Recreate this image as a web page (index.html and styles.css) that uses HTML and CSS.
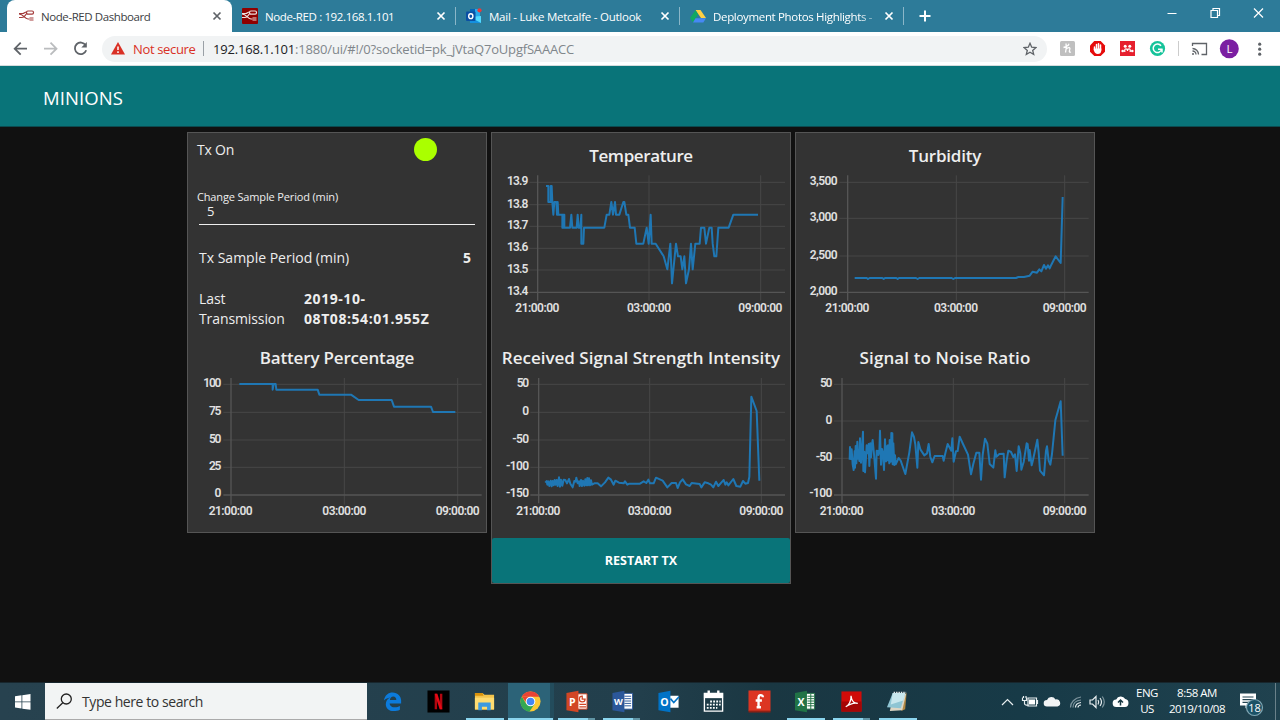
FILE: index.html
```html
<!DOCTYPE html>
<html lang="en">
<head>
<meta charset="utf-8">
<title>Node-RED Dashboard</title>
<link rel="stylesheet" href="styles.css">
</head>
<body>
<svg class="defs" width="0" height="0">
  <symbol id="nodes" viewBox="0 0 16 16"><path d="M0 5.500h3.500c2 0 2-1.500 4-1.500M0 6c5 0 5 5 9 5h1.500" fill="none" stroke="currentColor" stroke-width="1.200"/><rect x="7.500" y="3" width="7" height="3.200" rx="1.400" fill="none" stroke="currentColor" stroke-width="1.200"/><path d="M0 9.500h3c3 0 3-3 5-4M10.500 10h4M10.500 12h4" fill="none" stroke="currentColor" stroke-width="1.100"/></symbol>
  <symbol id="close" viewBox="0 0 10 10"><path d="M1.500 1.500l7 7M8.500 1.500l-7 7" stroke="currentColor" stroke-width="1.700" fill="none"/></symbol>
</svg>
<header class="tabs">
  <div class="tab active"><svg class="fav red" width="16" height="16"><use href="#nodes"/></svg><span class="t1">Node-RED Dashboard</span><svg class="x" width="10" height="10"><use href="#close"/></svg></div>
  <div class="tab"><svg class="fav boxed" width="16" height="16"><use href="#nodes"/></svg><span class="t2">Node-RED : 192.168.1.101</span><svg class="x" width="10" height="10"><use href="#close"/></svg></div>
  <div class="tab"><svg class="fav" width="16" height="16" viewBox="0 0 16 16"><path d="M4 1h10v14H4z" fill="#28a8ea"/><path d="M4 1h5v5H4z" fill="#0364b8"/><path d="M4 9l11-1v7H4z" fill="#50d9ff"/><path d="M4 9l11 6H4z" fill="#1490df"/><rect y="3.500" width="9.500" height="9.500" rx="1" fill="#0a50a4"/><ellipse cx="4.800" cy="8.200" rx="2.100" ry="2.400" fill="none" stroke="#fff" stroke-width="1.400"/><circle cx="13.500" cy="2.300" r="2.100" fill="#e83b3b"/></svg><span class="t3">Mail - Luke Metcalfe - Outlook</span><svg class="x" width="10" height="10"><use href="#close"/></svg></div>
  <div class="tab"><svg class="fav" width="16" height="16" viewBox="0 0 16 16"><path d="M5.500 2h5L16 10h-5z" fill="#ffcf43"/><path d="M5.500 2L8 6.500 3 14.500 0 10z" fill="#11a861"/><path d="M5.500 10.200H16L13.300 14.500H3z" fill="#4688f4"/></svg><span class="t4">Deployment Photos Highlights -</span><svg class="x" width="10" height="10"><use href="#close"/></svg></div>
  <svg class="plus" width="12" height="12" viewBox="0 0 12 12"><path d="M6 .5v11M.5 6h11" stroke="#fff" stroke-width="2"/></svg>
  <svg class="wincontrols" width="110" height="28" viewBox="1166 0 110 28" fill="none" stroke="#fff" stroke-width="1.200"><path d="M1167.500 13.500h9M1254 8.500l9 9M1263 8.500l-9 9"/><path d="M1211 10.500h6.500v7h-6.500zM1213 10V8.500h6.500v7h-2"/></svg>
</header>
<nav class="toolbar">
  <svg class="navicons" width="102" height="34" viewBox="0 32 102 34" fill="none" stroke="#5f6368" stroke-width="1.800"><path d="M27 48.700H15M20.700 42.700l-6 6 6 6"/><path stroke="#babcbe" d="M44 48.700h12M50.500 42.700l6 6-6 6"/><path d="M85.600 45.200a5.800 5.800 0 1 0 .6 5"/><path d="M86.800 42v5.500h-5.500z" fill="#5f6368" stroke="none"/></svg>
  <div class="omnibox">
    <svg width="14" height="13" viewBox="0 0 14 13"><path d="M7 0l7 12.500H0z" fill="#d93025"/><path d="M7 4.500V8M7 9.300v1.600" stroke="#fff" stroke-width="1.500"/></svg>
    <span class="warn">Not secure</span><i class="vr"></i>
    <span class="url"><b>192.168.1.101</b>:1880/ui/#!/0?socketid=pk_jVtaQ7oUpgfSAAACC</span>
    <svg class="star" width="14" height="14" viewBox="0 0 14 14"><path d="M7 1.300l1.700 3.900 4.200.4-3.200 2.800 1 4.100L7 10.300l-3.700 2.200 1-4.100-3.200-2.800 4.200-.4z" fill="none" stroke="#5f6368" stroke-width="1.300"/></svg>
  </div>
  <svg class="ext" width="233" height="34" viewBox="1047 32 233 34">
    <rect x="1060" y="41" width="15" height="15" rx="1.500" fill="#bfbfbf"/><path d="M1065.500 52.500c1-3 1-6 .5-9M1063.500 47.500c4-1 6-3 5-3.700M1066 49c4-2.500 4.500-1 3.500 1.500-.5 1.500 0 2 1.500 1.500" fill="none" stroke="#fff" stroke-width="1.300"/>
    <path d="M1094.300 41h6.400l4.300 4.500v6.200l-4.300 4.300h-6.400l-4.300-4.300v-6.200z" fill="#e60b0b"/><path d="M1094.500 47v3M1096.500 44.500v5M1098.500 43.800v5.500M1100.500 45v5" stroke="#fff" stroke-width="1.500" stroke-linecap="round"/><path d="M1093.800 48.500h7.500v2c0 2.500-1.500 3.500-3.500 3.500s-3.500-1.500-4-4z" fill="#fff"/>
    <rect x="1120" y="41" width="15" height="15" fill="#e6202e"/><circle cx="1125.200" cy="46.200" r="1.500" fill="#fff"/><circle cx="1129.800" cy="46.200" r="1.500" fill="#fff"/><circle cx="1122.700" cy="51" r="1.300" fill="#fff"/><circle cx="1132.300" cy="51" r="1.300" fill="#fff"/><path d="M1124.800 52c-.5-2.800.5-4 2.700-2.500 2.200-1.500 3.200-.3 2.700 2.500M1127.500 49.500v1.500" fill="none" stroke="#fff" stroke-width="1.300"/>
    <circle cx="1157.500" cy="48.500" r="7.600" fill="#15c39a"/><path d="M1161 45.700a4.300 4.300 0 1 0 .7 3.500h-3.700M1162 49v3.500" fill="none" stroke="#fff" stroke-width="1.500"/>
    <path d="M1178.500 41v15" stroke="#ccc"/>
    <g fill="none" stroke="#5f6368" stroke-width="1.300"><path d="M1192.500 46v-2.500h14v11h-5M1192.500 48.500a6 6 0 0 1 6 6M1192.500 51a3.500 3.500 0 0 1 3.500 3.500"/></g><circle cx="1193" cy="54" r="1" fill="#5f6368"/>
    <circle cx="1229.300" cy="48.700" r="9.500" fill="#7b1fa2"/><text x="1229.500" y="53" text-anchor="middle" font-size="11.500" fill="#fff">L</text>
    <g fill="#5f6368"><circle cx="1259.700" cy="44.200" r="1.600"/><circle cx="1259.700" cy="49.200" r="1.600"/><circle cx="1259.700" cy="54.200" r="1.600"/></g>
  </svg>
</nav>
<div class="appbar"><h1>MINIONS</h1></div>
<main class="board">
  <section class="card">
    <div class="status"><span>Tx On</span><i class="led"></i></div>
    <div class="field"><label>Change Sample Period (min)</label><div class="value">5</div></div>
    <div class="row"><span class="period">Tx Sample Period (min)</span><b>5</b></div>
    <div class="last"><span>Last Transmission</span><b>2019-10-08T08:54:01.955Z</b></div>
    <h2 class="h-bat">Battery Percentage</h2>
    <svg class="chart" viewBox="24 96 894 456">
      <path class="grid" d="M130 133H905M130 217H905M130 300H905M130 382H905M493 114V494M833 114V494"/><path class="axis" d="M130 465H905M153 114V494"/>
      <g class="y"><text x="124" y="142" textLength="54">100</text><text x="124" y="225" textLength="37">75</text><text x="124" y="309" textLength="37">50</text><text x="124" y="389" textLength="37">25</text><text x="124" y="472">0</text></g>
      <g class="xl"><text x="152" y="524" textLength="132">21:00:00</text><text x="493" y="524" textLength="132">03:00:00</text><text x="833" y="524" textLength="132">09:00:00</text></g>
      <polyline points="178,132 278,132 278,149 281,132 287,132 289,149 413,149 418,164 513,164 536,180 635,180 642,200 753,200 759,216 826,216"/>
    </svg>
  </section>
  <section class="card">
    <h2 class="h-temp">Temperature</h2>
    <svg class="chart" viewBox="18 132 894 456">
      <path class="grid" d="M130 169H897M130 236H897M130 301H897M130 367H897M130 432H897M489 148V524M824 148V524"/><path class="axis" d="M130 499H897M155 148V524"/>
      <g class="y"><text x="127" y="177" textLength="64">13.9</text><text x="127" y="245" textLength="64">13.8</text><text x="127" y="310" textLength="64">13.7</text><text x="127" y="376" textLength="64">13.6</text><text x="127" y="441" textLength="64">13.5</text><text x="127" y="508" textLength="64">13.4</text></g>
      <g class="xl"><text x="154" y="558" textLength="132">21:00:00</text><text x="489" y="558" textLength="132">03:00:00</text><text x="823" y="558" textLength="132">09:00:00</text></g>
      <polyline points="180,180 187,180 187,228 194,228 194,180 197,180 199,228 202,266 205,228 211,228 213,266 215,228 217,266 229,266 229,305 231,305 231,266 235,266 235,305 252,305 256,266 259,305 272,305 275,266 278,305 283,305 286,266 286,353 292,353 294,305 355,305 362,266 370,266 376,228 381,266 387,228 390,266 400,266 412,228 415,228 421,266 427,266 432,305 446,305 451,353 472,353 482,305 488,353 494,266 497,353 509,353 533,391 544,430 553,353 558,472 570,353 576,391 584,391 589,430 595,391 600,472 609,430 615,353 620,430 628,353 641,353 645,305 655,305 660,353 670,305 677,305 680,353 685,391 691,391 697,305 728,305 742,266 816,266"/>
    </svg>
    <h2 class="h-rssi">Received Signal Strength Intensity</h2>
    <svg class="chart" viewBox="18 96 894 456">
      <path class="grid" d="M133 133H897M133 217H897M133 300H897M133 382H897M491 114V490M826 114V490"/><path class="axis" d="M133 465H897M158 114V490"/>
      <g class="y"><text x="129" y="142" textLength="37">50</text><text x="129" y="225">0</text><text x="129" y="309" textLength="50">-50</text><text x="129" y="389" textLength="69">-100</text><text x="129" y="472" textLength="69">-150</text></g>
      <g class="xl"><text x="157" y="524" textLength="132">21:00:00</text><text x="491" y="524" textLength="132">03:00:00</text><text x="826" y="524" textLength="132">09:00:00</text></g>
      <polyline points="178,428 182,423 184,434 187,424 190,438 194,422 197,439 200,423 203,436 206,420 209,434 212,420 215,438 219,412 222,440 225,419 229,437 233,419 238,420 243,430 249,417 253,431 260,442 265,423 269,425 271,413 275,430 279,424 281,438 285,420 288,438 291,422 295,437 298,418 301,436 304,414 306,436 309,415 312,436 315,421 318,434 325,430 335,430 345,439 357,427 367,413 375,419 383,434 388,422 399,428 413,430 417,424 424,434 430,431 462,431 473,424 481,429 487,419 492,430 503,430 510,413 530,422 544,442 557,429 570,429 575,444 582,427 590,418 600,433 611,438 617,429 641,432 646,442 656,427 667,430 675,434 682,442 690,425 697,438 709,424 713,420 718,434 722,427 727,436 742,417 751,438 763,440 771,423 778,431 786,429 790,411 796,170 812,213 820,422"/>
    </svg>
    <button class="restart">RESTART TX</button>
  </section>
  <section class="card">
    <h2 class="h-turb">Turbidity</h2>
    <svg class="chart" viewBox="18 132 894 456">
      <path class="grid" d="M148 169H896M148 277H896M148 390H896M499 148V524M824 148V524"/><path class="axis" d="M148 499H896M173 148V524"/>
      <g class="y"><text x="143" y="177" textLength="84">3,500</text><text x="143" y="286" textLength="84">3,000</text><text x="143" y="399" textLength="84">2,500</text><text x="143" y="508" textLength="84">2,000</text></g>
      <g class="xl"><text x="172" y="558" textLength="132">21:00:00</text><text x="498" y="558" textLength="132">03:00:00</text><text x="824" y="558" textLength="132">09:00:00</text></g>
      <polyline points="194,456 230,456 234,459 239,456 277,456 281,459 285,456 319,456 323,459 327,456 378,456 383,459 388,456 485,456 490,459 495,456 678,456 685,453 702,453 719,449 728,437 741,440 748,430 754,436 762,417 768,428 774,418 779,427 784,416 797,391 812,411 818,213"/>
    </svg>
    <h2 class="h-snr">Signal to Noise Ratio</h2>
    <svg class="chart" viewBox="18 96 894 456">
      <path class="grid" d="M132 133H896M132 243H896M132 355H896M490 114V490M824 114V490"/><path class="axis" d="M132 465H896M156 114V490"/>
      <g class="y"><text x="127" y="142" textLength="37">50</text><text x="127" y="251">0</text><text x="127" y="363" textLength="50">-50</text><text x="127" y="472" textLength="69">-100</text></g>
      <g class="xl"><text x="155" y="524" textLength="132">21:00:00</text><text x="490" y="524" textLength="132">03:00:00</text><text x="824" y="524" textLength="132">09:00:00</text></g>
      <polyline points="179,359 180,321 182,357 185,328 188,373 191,390 194,333 195,383 197,318 199,370 202,305 204,356 207,330 208,363 210,295 213,368 216,324 219,275 220,393 223,335 225,397 228,354 230,316 234,340 236,312 238,378 241,310 243,352 246,312 248,300 252,342 258,416 260,332 264,333 265,345 268,335 270,272 273,374 276,327 279,340 282,390 285,298 288,364 290,319 293,361 294,316 298,370 299,300 302,365 304,279 306,350 307,280 308,373 310,310 313,375 315,346 317,373 326,354 332,362 346,402 358,337 366,277 372,291 376,314 382,383 385,306 391,328 403,346 411,340 416,312 421,351 427,367 434,348 458,348 461,362 466,340 473,312 484,332 487,295 491,365 498,334 503,333 509,290 519,312 534,344 543,403 550,371 559,338 568,338 573,419 578,345 585,296 592,311 599,372 610,383 616,331 619,350 628,342 641,341 644,412 650,361 655,332 663,336 670,351 675,343 680,393 686,319 691,340 694,389 701,366 710,310 713,312 717,362 719,330 725,376 729,360 742,299 746,337 750,392 762,406 768,332 771,319 776,362 781,374 786,342 796,241 812,184 818,347"/>
    </svg>
  </section>
</main>
<footer class="taskbar">
  <div class="start"><svg width="16" height="16" viewBox="0 0 16 16"><path d="M0 2.200l6.500-.9v6.200H0zM7.300 1.200L15.500 0v7.500H7.300zM0 8.300h6.500v6.200L0 13.600zM7.300 8.300h8.200v7.500l-8.200-1.100z" fill="#fff"/></svg></div>
  <div class="search"><svg width="17" height="17" viewBox="0 0 17 17" fill="none" stroke="#222" stroke-width="1.300"><circle cx="10.300" cy="6" r="5"/><path d="M6.800 9.700L.8 15.500"/></svg><span>Type here to search</span></div>
  <div class="apps">
    <div class="app"><svg viewBox="0 0 24 24"><path d="M3 11C4 5 8 2.500 12 2.500c5.500 0 9 4 9 8.500v3H9c.3 3 3 4 5.500 4 2 0 3.800-.5 5.200-1.300v3.800c-2 1-4 1.500-6.400 1.500-5 0-8.300-2.800-8.300-7.200 0-3 1.500-5.500 4.500-7C7 8.500 5 9 3 11zM9.300 10.500h6.700c0-2.500-1.300-3.800-3.200-3.800-2 0-3.200 1.400-3.500 3.800z" fill="#0c7bdc"/></svg></div>
    <div class="app"><svg viewBox="0 0 24 24"><path d="M.5.500h23v23H.5z" fill="#000"/><path d="M8 4h2.500v16H8zM13.500 4H16v16h-2.500z" fill="#b20710"/><path d="M8 4h2.800l5.200 16h-2.800z" fill="#e50914"/></svg></div>
    <div class="app run"><svg viewBox="0 0 24 24"><path d="M2 3h8l2 2h10v15.500H2z" fill="#f4c44c"/><path d="M2 3h8l1 3H2z" fill="#d9920b"/><path d="M2 8h20v12H2z" fill="#ffdc70"/><path d="M5.500 21v-8h13v8h-3.800v-3.500H9.300V21z" fill="#3d9ae0"/></svg></div>
    <div class="app run on"><svg viewBox="0 0 24 24"><circle cx="12" cy="12" r="10.500" fill="#fcc934"/><path d="M2.900 6.700A10.500 10.500 0 0 1 21.200 7H12z" fill="#e94335"/><path d="M2.900 6.700A10.500 10.500 0 0 0 11 22.500L16.300 14.500 7.600 14.500z" fill="#34a853"/><path d="M2.900 6.700L12 7l-4.500 6z" fill="#e94335"/><circle cx="12" cy="12" r="5" fill="#fff"/><circle cx="12" cy="12" r="4" fill="#4286f5"/></svg></div>
    <div class="app run multi"><svg viewBox="0 0 24 24"><path d="M13 4h10v16H13z" fill="#fff" stroke="#d24625"/><path d="M18 6.500a3 3 0 1 0 3 3h-3zM15 15h7M15 17.500h7" stroke="#d24625" fill="none" stroke-width="1.300"/><path d="M1.500 3L14 .8v22.400L1.500 21z" fill="#d24625"/><text x="7.700" y="16.300">P</text></svg></div>
    <div class="app run multi"><svg viewBox="0 0 24 24"><path d="M12 3.500h10.500v16.500H12z" fill="#fff" stroke="#2b579a"/><path d="M14 6.500h7M14 9h7M14 11.500h7M14 14h7M14 16.500h7" stroke="#2b579a"/><path d="M1.500 3L14 .8v22.400L1.500 21z" fill="#2b579a"/><text class="w" x="7.700" y="15.500">W</text></svg></div>
    <div class="app"><svg viewBox="0 0 24 24"><path d="M12 6h10.500v12.500H12z" fill="#fff"/><path d="M14 9l3.500 4 5.500-6" fill="none" stroke="#0072c6" stroke-width="1.700"/><path d="M1.500 3L14 .8v22.400L1.500 21z" fill="#0072c6"/><text x="7.700" y="16.300">O</text></svg></div>
    <div class="app"><svg viewBox="0 0 24 24"><path d="M2.500 3.500h19v18.500h-19z" fill="none" stroke="#fff" stroke-width="1.400"/><path d="M2 3.500h20V8.500H2z" fill="#fff"/><path d="M7 .5v6M17 .5v6" stroke="#fff" stroke-width="2.500"/><path d="M8.500 12h11M5 15.300h14.500M5 18.600h11" stroke="#fff" stroke-width="1.900" stroke-dasharray="1.900 1.300"/></svg></div>
    <div class="app"><svg viewBox="0 0 24 24"><path d="M.5.500h23v21.500H.5z" fill="#dc3522"/><path d="M.5 21.500h23v2H.5z" fill="#8e2014"/><path d="M15.500 7.500c0-3-4.500-3-4.500.5V18M8 11h6.500M9 18h4.500" fill="none" stroke="#fff" stroke-width="2.500"/></svg></div>
    <div class="app run"><svg viewBox="0 0 24 24"><path d="M12 3.500h9.500v16.500H12z" fill="#fff" stroke="#217346"/><path d="M14 6.500h7M14 9h7M14 11.500h7M14 14h7M14 16.500h7M17.500 4v16" stroke="#217346"/><path d="M1 3L13.500.8v22.400L1 21z" fill="#217346"/><text x="7.200" y="16.300">X</text></svg></div>
    <div class="app run multi"><svg viewBox="0 0 24 24"><path d="M1.500 1.500h21v21h-21z" fill="#d10b08"/><path d="M1.500 12h21v10.500h-21z" fill="#a50505"/><path d="M6 17.500c3-1.500 6-6 5.500-11.500.5 5 3 8 7 8-4-1-8 .5-12.500 3.500z" fill="none" stroke="#fff" stroke-width="1.300"/></svg></div>
    <div class="app run"><svg viewBox="0 0 24 24"><path d="M21.500 3L20 20l-4 2 4-18z" fill="#b18843"/><path d="M8 4h13l-4 17-13 1z" fill="#ddd6c4"/><path d="M7 3h13l-4.500 16L1 18z" fill="#8fc5d3"/><path d="M7 3h13l-2 8-13 4z" fill="#c8e7ed"/><path d="M8 2.500h13" stroke="#e9e9e9" stroke-width="1.500" stroke-dasharray="1.500 1"/></svg></div>
  </div>
  <div class="tray">
    <svg width="152" height="38" viewBox="994 682.500 152 38" fill="none" stroke="#e8eef0" stroke-width="1.200"><path d="M1002 704.500l5.500-5.500 5.500 5.500"/>
      <path d="M1028 697.500h8.500v8H1028zM1037.500 699.500v4"/><path d="M1029 699h6v5h-6z" fill="#fff" stroke="none"/><path d="M1022.500 697v3h4v-3M1024.500 700v3c0 1.500 2 2 4 1.500M1023.500 695.500v2M1026 695.500v2"/>
      <path d="M1047 706a3.300 3.300 0 0 1 0-6.600 4.800 4.800 0 0 1 8.500-.4 3.600 3.600 0 0 1 2 7z" fill="#f2f4f5" stroke="none"/>
      <g stroke="#7d949d"><path d="M1070.500 707c0-5 4-9.500 10.500-10.500M1073 707c0-4 3-7 8-7.500"/></g><path d="M1075.500 707c0-3 2-4.500 5.500-5M1078 707c0-1.500 1-2.300 3-2.500"/>
      <path d="M1090 699.500h2.500l3.500-3.500v11l-3.500-3.500h-2.500zM1098 699.500q1.500 2 0 4.500M1100 697.500q3 4 0 8"/><path d="M1102.300 696q4 5.500 0 11" stroke="#7d949d"/>
      <path d="M1116.500 706.500a3.700 3.700 0 0 1-.3-7.400 5 5 0 0 1 9-.5 4 4 0 0 1-.2 7.900z" fill="#fff" stroke="none"/><path d="M1120.500 705v-5M1118 702l2.500-2.500 2.500 2.500" stroke="#193944" stroke-width="1.500"/></svg>
    <div class="lang">ENG<br>US</div>
    <div class="clock"><span>8:58 AM</span><span>2019/10/08</span></div>
    <svg class="note" width="26" height="26" viewBox="0 0 26 26"><path d="M1 .5h16v12H9l-2.500 3v-3H1z" fill="#fff"/><path d="M3.500 4h11M3.500 6.700h11M3.500 9.400h7" stroke="#254552" stroke-width="1.200"/><circle cx="15.500" cy="14.500" r="8" fill="#1b5266" stroke="#7fa6b3" stroke-width="1.200"/><text x="15.500" y="18.500" text-anchor="middle" fill="#fff" font-size="11">18</text></svg>
    <i class="peek"></i>
  </div>
</footer>
</body>
</html>
```
FILE: styles.css
```css
* { box-sizing: border-box; }
body { margin: 0; width: 1280px; height: 720px; overflow: hidden; display: flex; flex-direction: column; background: #111; font-family: "Open Sans", "Noto Sans", sans-serif; }
h1, h2 { margin: 0; font-weight: 400; }
svg { display: block; flex: none; }
.defs { position: absolute; }
.tabs { height: 32px; flex: none; background: #2d7b99; display: flex; padding-left: 7px; color: #fff; font-size: 11.500px; }
.tab { width: 224px; display: flex; align-items: center; padding: 0 10px; background: linear-gradient(#8ab6c8, #8ab6c8) right 7px / 1px 18px no-repeat; white-space: nowrap; }
.tab.active { width: 225px; background: #fff; color: #3c4043; border-radius: 8px 8px 0 0; padding: 0 10px 0 12px; }
.tab span { width: 164px; margin-left: 7px; }
.tab.active span { margin-left: 6px; }
.x { margin-left: auto; color: #fff; }
.active .x { color: #5f6368; }
.red { color: #a33a3a; }
.boxed { background: #8f0000; color: #eedede; border-radius: 1px; }
.t1 { letter-spacing: -.42px; }
.t2 { letter-spacing: -.38px; }
.t3 { letter-spacing: -.24px; }
.t4 { letter-spacing: -.33px; -webkit-mask-image: linear-gradient(90deg, #000 146px, rgba(0, 0, 0, .4) 160px); mask-image: linear-gradient(90deg, #000 146px, rgba(0, 0, 0, .4) 160px); }
.plus { margin: 10px 0 0 15px; }
.wincontrols { margin-left: auto; margin-right: 4px; }
.toolbar { height: 34px; flex: none; background: #fff; border-bottom: 1px solid #d5dcdd; display: flex; align-items: center; }
.omnibox { width: 945px; height: 26px; border-radius: 13px; background: #f1f3f4; display: flex; align-items: center; padding: 0 9px; font-size: 13px; color: #80868b; white-space: nowrap; }
.warn { color: #d93025; margin-left: 8px; width: 62px; letter-spacing: -.35px; }
.vr { width: 1px; height: 15px; background: #9aa0a6; margin: 0 9px 0 8px; }
.url { letter-spacing: -.19px; }
.url b { font-weight: 400; color: #202124; }
.star { margin-left: auto; margin-right: 1px; }
.appbar { height: 61px; flex: none; background: #097479; border-bottom: 1px solid #0b4b50; padding: 3px 43px 0; display: flex; align-items: center; }
.appbar h1 { color: #fff; font-size: 18.500px; letter-spacing: .1px; }
.board { flex: 1; display: flex; align-items: flex-start; gap: 4px; padding: 5px 0 0 187px; color: #eee; }
.card { width: 300px; background: #333; border: 1px solid #555; }
.card:nth-child(odd) { height: 401px; }
.status { height: 33px; padding: 0 49px 0 9px; display: flex; align-items: center; justify-content: space-between; font-size: 14px; letter-spacing: -.2px; }
.led { width: 23px; height: 23px; border-radius: 50%; background: #af0; }
.field { margin: 23px 11px 0 11px; height: 36px; border-bottom: 1px solid #eee; }
.field label { display: block; margin-left: -2px; font-size: 11px; line-height: 15px; letter-spacing: -.15px; }
.field .value { font-size: 13px; line-height: 14px; padding-left: 8px; }
.row { margin-top: 14px; height: 36px; padding: 0 15px 0 11px; display: flex; align-items: center; justify-content: space-between; font-size: 14px; }
.last { margin-top: 14px; height: 40px; padding-left: 11px; display: flex; font-size: 14px; line-height: 20px; }
.last span { width: 105px; padding-right: 15px; letter-spacing: -.1px; }
.last b { width: 140px; letter-spacing: .57px; }
h2 { font-size: 17px; font-weight: 600; display: flex; align-items: center; justify-content: center; white-space: nowrap; line-height: 24px; height: 50px; padding-top: 22px; }
.card > h2:first-child { height: 37px; padding-top: 9px; }
h2.h-bat { height: 43px; padding-top: 15px; letter-spacing: -.18px; }
h2.h-temp { letter-spacing: -.4px; }
h2.h-turb { letter-spacing: -.2px; }
h2.h-snr { letter-spacing: .12px; }
.chart { width: 298px; height: 152px; }
.chart text { font: 600 36px Roboto, "Liberation Sans", sans-serif; fill: #e0e0e0; }
.y text { text-anchor: end; }
.xl text { text-anchor: middle; }
.grid, .axis { fill: none; stroke: #474747; stroke-width: 3; }
.axis { stroke: #555; stroke-width: 4; }
.chart polyline { fill: none; stroke: #1f77b4; stroke-width: 6; stroke-linejoin: round; }
.restart { display: block; width: 298px; height: 45px; margin-top: 14px; border: 0; border-radius: 2px; background: #097479; color: #fff; font: 700 12.500px "Open Sans", "Noto Sans", sans-serif; }
.taskbar { height: 38px; flex: none; display: flex; background: linear-gradient(90deg, #27424f, #223f4c 50%, #1a3742 60%, #173a47 80%, #20424f); border-top: 1px solid #17262d; color: #fff; }
.start { width: 45px; display: flex; align-items: center; justify-content: center; }
.search { width: 322px; background: #f2f4f4; color: #333; display: flex; align-items: center; padding-left: 11px; font-size: 14px; border-bottom: 1px solid #aaa; letter-spacing: -.42px; }
.search span { margin-left: 9px; }
.apps { display: flex; margin-left: 3px; }
.app { width: 45.900px; display: flex; justify-content: center; align-items: center; }
.app svg { width: 23px; height: 23px; margin-right: .5px; }
.app text { fill: #fff; font: 700 11px "Open Sans", sans-serif; text-anchor: middle; }
.app text.w { font-size: 9.500px; }
.run { background: linear-gradient(#8bd5ee, #8bd5ee) 4px 100% / 38px 2px no-repeat; }
.multi { background: linear-gradient(90deg, #8bd5ee 30px, #6195a5 30px) 4px 100% / 37px 2px no-repeat; }
.on { background: linear-gradient(#8bd5ee, #8bd5ee) 0 100% / 45px 2px no-repeat, linear-gradient(#2c6378, #2c6378) 0 0 / 42px 100% no-repeat, #234c5c; }
.tray { margin-left: auto; display: flex; width: 286px; font-size: 11.500px; }
.lang { width: 26px; margin-left: -12px; padding-top: 2px; line-height: 16px; text-align: center; letter-spacing: -.5px; }
.clock { width: 70px; margin-left: 2px; display: flex; flex-direction: column; align-items: center; line-height: 16px; padding-top: 2px; letter-spacing: -.5px; white-space: nowrap; }
.note { margin: 10px 0 0 7px; }
.peek { width: 1px; background: #6a818a; margin-left: auto; margin-right: 4px; }
```
